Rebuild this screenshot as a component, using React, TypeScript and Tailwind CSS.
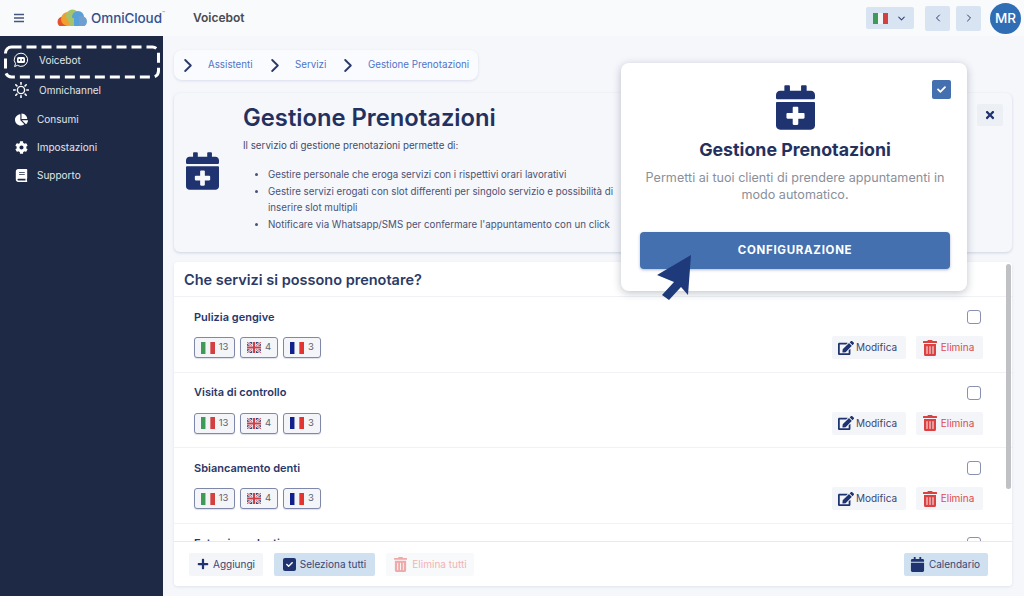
import React from "react";
import { FaCalendarPlus, FaEdit, FaTrashAlt, FaCog, FaBook, FaChartPie, FaCalendar, FaCheck, FaTimes, FaPlus } from "react-icons/fa";
import { ChevronDown, ChevronLeft, ChevronRight } from "lucide-react";

const navy = "#1f3370";

function Italy({ w = 14, h = 12 }: { w?: number; h?: number }) {
  return (
    <svg width={w} height={h} viewBox="0 0 3 2" preserveAspectRatio="none" className="shrink-0">
      <rect width="1" height="2" fill="#3f9a57" />
      <rect x="1" width="1" height="2" fill="#f3f4f6" />
      <rect x="2" width="1" height="2" fill="#d2413f" />
    </svg>
  );
}
function France() {
  return (
    <svg width="14" height="12" viewBox="0 0 3 2" preserveAspectRatio="none" className="shrink-0">
      <rect width="1" height="2" fill="#10218b" />
      <rect x="1" width="1" height="2" fill="#f3f4f6" />
      <rect x="2" width="1" height="2" fill="#e3342f" />
    </svg>
  );
}
function UK() {
  return (
    <svg width="14" height="11" viewBox="0 0 14 11" className="shrink-0">
      <rect width="14" height="11" fill="#3a4a80" />
      <path d="M0 0L14 11M14 0L0 11" stroke="#eef0f4" strokeWidth="2.4" />
      <path d="M0 0L14 11M14 0L0 11" stroke="#cf3f4a" strokeWidth="0.9" />
      <path d="M7 0V11M0 5.5H14" stroke="#eef0f4" strokeWidth="3.6" />
      <path d="M7 0V11M0 5.5H14" stroke="#cf3f4a" strokeWidth="2" />
    </svg>
  );
}

function Crumb() {
  return (
    <svg width="8" height="13" viewBox="0 0 8 13" fill="none" className="shrink-0">
      <path d="M1.2 1L6.8 6.5L1.2 12" stroke="#2a3768" strokeWidth="1.8" strokeLinecap="round" strokeLinejoin="round" />
    </svg>
  );
}

function Badge({ children, n, w }: { children: React.ReactNode; n: number; w: number }) {
  return (
    <span style={{ width: w }} className="h-[21px] flex items-center justify-center gap-[4px] rounded-[3px] border border-[#7f88a8] bg-[#f3f5f9] text-[9.5px] text-[#5b6270] shadow-[0_1px_1px_rgba(31,51,112,0.15)]">
      {children}
      <span>{n}</span>
    </span>
  );
}

function Row({ title }: { title: string }) {
  return (
    <div className="h-[75.5px] shrink-0 border-b border-[#f0f2f6] pl-[20px] pr-[29px] pt-[12px] flex flex-col">
      <div className="flex items-center justify-between h-[16px]">
        <span className="text-[11px] font-semibold text-[#2a3768]">{title}</span>
        <span className="w-[14px] h-[14px] mr-[2px] rounded-[3px] border border-[#8a90b0] bg-white" />
      </div>
      <div className="flex items-center justify-between mt-[11px]">
        <div className="flex gap-[5px]">
          <Badge n={13} w={41}><Italy /></Badge>
          <Badge n={4} w={38}><UK /></Badge>
          <Badge n={3} w={38}><France /></Badge>
        </div>
        <div className="flex gap-[10px]">
          <button className="h-[23px] w-[74px] pr-[3px] flex items-center justify-center gap-[2px] rounded-[2px] bg-[#f3f5f8] text-[10px] text-[#3a4673]">
            <FaEdit className="text-[16px]" style={{ color: navy }} />Modifica
          </button>
          <button className="h-[23px] w-[67px] pr-[3px] flex items-center justify-center gap-[3px] rounded-[2px] bg-[#f3f5f8] text-[10px] text-[#dd4b4b]">
            <FaTrashAlt className="text-[16px] text-[#dd4040]" />Elimina
          </button>
        </div>
      </div>
    </div>
  );
}

function NavItem({ icon, label, x, h }: { icon: React.ReactNode; label: string; x: number; h: number }) {
  return (
    <div style={{ height: h }} className="flex items-center pl-[13px] text-[10px] text-[#e2e5ec]">
      <span className="w-[16px] flex justify-center text-white text-[13px]">{icon}</span>
      <span style={{ marginLeft: x }}>{label}</span>
    </div>
  );
}

export default function App() {
  return (
    <div className="relative w-[1024px] h-[596px] overflow-hidden flex flex-col bg-[#f5f7fb]" style={{ fontFamily: "Inter, 'Liberation Sans', sans-serif" }}>
      {/* Top bar */}
      <header className="h-[36px] shrink-0 flex items-center bg-[#f8fafc]">
        <svg width="12" height="10" viewBox="0 0 12 10" className="ml-[13px]">
          <path d="M1 1.5H11M1 5H11M1 8.5H11" stroke="#44557f" strokeWidth="1.3" />
        </svg>
        <svg width="30" height="18" viewBox="0 0 30 18" className="ml-[32px]">
          <defs>
            <clipPath id="cl"><rect width="30" height="17" rx="3" /></clipPath>
          </defs>
          <g clipPath="url(#cl)">
            <circle cx="6" cy="13" r="5.5" fill="#e4522d" />
            <circle cx="11" cy="10" r="7" fill="#f0a030" />
            <circle cx="15.5" cy="7" r="6.5" fill="#a5c36a" />
            <circle cx="21" cy="8" r="6" fill="#5aa0d8" />
            <circle cx="24.5" cy="12.5" r="5.5" fill="#6f9fd0" />
            <rect x="16" y="9" width="6" height="8" fill="#5aa0d8" />
            <rect x="12" y="9" width="5" height="8" fill="#a5c36a" />
          </g>
        </svg>
        <span className="ml-[4px] text-[13.5px] font-medium text-[#35508f] tracking-[-0.1px]">OmniCloud</span>
        <span className="text-[5px] text-[#7a8090] -mt-[8px]">™</span>
        <span className="ml-[28px] text-[12px] font-semibold text-[#4a4a4f]">Voicebot</span>
        <div className="ml-auto flex items-center">
          <div className="w-[48px] h-[22px] flex items-center justify-center gap-[8px] rounded-[2px] bg-[#d8e4f2]">
            <Italy w={15} h={11} />
            <ChevronDown size={11} strokeWidth={2.2} className="text-[#2f3f70]" />
          </div>
          <button className="ml-[11px] w-[25px] h-[25px] flex items-center justify-center rounded-[2px] bg-[#d8e4f2]">
            <ChevronLeft size={12} strokeWidth={2} className="text-[#2f3f70]" />
          </button>
          <button className="ml-[6px] w-[25px] h-[25px] flex items-center justify-center rounded-[2px] bg-[#d8e4f2]">
            <ChevronRight size={12} strokeWidth={2} className="text-[#2f3f70]" />
          </button>
          <div className="ml-[9px] mr-[3px] w-[31px] h-[31px] flex items-center justify-center rounded-full bg-[#2f6db5] text-white text-[13.5px] font-medium">MR</div>
        </div>
      </header>

      <div className="flex flex-1 min-h-0">
        {/* Sidebar */}
        <aside className="w-[163px] shrink-0 bg-[#1e2a45] pt-[9px]">
          <NavItem h={30} x={10} label="Voicebot" icon={
            <svg width="16" height="16" viewBox="0 0 16 16" fill="none">
              <path d="M8 1.2a6.6 6.6 0 1 1-3.6 12.1L1.6 14.6l.9-2.9A6.6 6.6 0 0 1 8 1.2Z" stroke="#fff" strokeWidth="1" />
              <rect x="4" y="5" width="8" height="6" rx="1.5" fill="#fff" />
              <circle cx="6.4" cy="8" r=".9" fill="#1e2a45" />
              <circle cx="9.6" cy="8" r=".9" fill="#1e2a45" />
            </svg>
          } />
          <NavItem h={30} x={10} label="Omnichannel" icon={
            <svg width="16" height="16" viewBox="0 0 16 16" fill="none" stroke="#fff">
              <circle cx="8" cy="8" r="3.6" strokeWidth="1.4" />
              <path d="M8 .6V2.2M8 13.8V15.4M.6 8H2.2M13.8 8H15.4M2.8 2.8L3.9 3.9M12.1 12.1L13.2 13.2M2.8 13.2L3.9 12.1M12.1 3.9L13.2 2.8" strokeWidth="1.6" strokeLinecap="round" />
            </svg>
          } />
          <NavItem h={28} x={8} label="Consumi" icon={<FaChartPie />} />
          <NavItem h={28} x={8} label="Impostazioni" icon={<FaCog />} />
          <NavItem h={28} x={8} label="Supporto" icon={<FaBook />} />
        </aside>

        {/* Main */}
        <main className="flex-1 min-w-0 pl-[11px] pr-[12px] pt-[14px] pb-[10px] flex flex-col">
          <nav className="w-[304px] h-[30px] shrink-0 flex items-center pl-[10px] rounded-[8px] bg-[#fafbfe] shadow-[0_1px_3px_rgba(31,51,112,0.12)] text-[9.75px] whitespace-nowrap text-[#4f74c9]">
            <Crumb />
            <span className="ml-[16px] w-[47px]">Assistenti</span>
            <span className="ml-[16px]"><Crumb /></span>
            <span className="ml-[16px] w-[33px]">Servizi</span>
            <span className="ml-[16px]"><Crumb /></span>
            <span className="ml-[16px]">Gestione Prenotazioni</span>
          </nav>

          <section className="relative mt-[13px] h-[159px] shrink-0 flex rounded-[6px] bg-[#f5f7fb] shadow-[0_1px_3px_rgba(31,51,112,0.18)]">
            <FaCalendarPlus className="ml-[12px] mt-[59px] shrink-0" style={{ color: navy, width: 33, height: 38 }} />
            <div className="ml-[24px] pt-[9px] text-[#434b6b]">
              <h1 className="text-[23.75px] leading-[32px] font-semibold text-[#24315f]">Gestione Prenotazioni</h1>
              <p className="mt-[4px] text-[9.75px] leading-[16px]">Il servizio di gestione prenotazioni permette di:</p>
              <ul className="mt-[13px] pl-[25px] w-[374px] list-disc text-[9.75px] leading-[16.7px] text-[#4a5275]">
                <li>Gestire personale che eroga servizi con i rispettivi orari lavorativi</li>
                <li>Gestire servizi erogati con slot differenti per singolo servizio e possibilità di inserire slot multipli</li>
                <li>Notificare via Whatsapp/SMS per confermare l'appuntamento con un click</li>
              </ul>
            </div>
            <button className="absolute right-[9px] top-[11px] w-[26px] h-[22px] flex items-center justify-center bg-[#eceff4] rounded-[2px]">
              <FaTimes className="text-[12px]" style={{ color: navy }} />
            </button>
          </section>

          <section className="relative mt-[10px] flex-1 min-h-0 flex flex-col rounded-[4px] bg-white shadow-[0_1px_3px_rgba(31,51,112,0.1)]">
            <h2 className="h-[35px] shrink-0 flex items-center pl-[10px] pt-[1px] text-[14.5px] font-semibold text-[#2d3a66] border-b border-[#f0f2f6]">Che servizi si possono prenotare?</h2>
            <div className="flex-1 min-h-0 overflow-hidden">
              <Row title="Pulizia gengive" />
              <Row title="Visita di controllo" />
              <Row title="Sbiancamento denti" />
              <Row title="Estrazione denti" />
            </div>
            <div className="h-[45px] shrink-0 flex items-center pl-[15px] pr-[24px] border-t border-[#e6e9ef] bg-white rounded-b-[4px]">
              <button className="h-[23px] w-[74px] flex items-center justify-center gap-[4px] rounded-[2px] bg-[#f3f5f8] text-[10px] text-[#3a4673]">
                <FaPlus className="text-[12px]" style={{ color: navy }} />Aggiungi
              </button>
              <button className="ml-[11px] h-[23px] w-[101px] flex items-center justify-center gap-[4px] rounded-[2px] bg-[#cfe0f0] text-[10px] text-[#3a4673]">
                <span className="w-[13px] h-[13px] flex items-center justify-center rounded-[2px]" style={{ background: navy }}>
                  <FaCheck className="text-[7px] text-white" />
                </span>
                Seleziona tutti
              </button>
              <button className="ml-[11px] h-[23px] w-[88px] flex items-center justify-center gap-[4px] rounded-[2px] bg-[#f8f9fb] text-[10px] text-[#f2b3b3]">
                <FaTrashAlt className="text-[15px] text-[#f0a9a9]" />Elimina tutti
              </button>
              <button className="ml-auto h-[23px] w-[84px] pr-[2px] flex items-center justify-center gap-[4px] rounded-[2px] bg-[#cfe0f0] text-[10px] text-[#3a4673]">
                <FaCalendar className="text-[15px]" style={{ color: navy }} />Calendario
              </button>
            </div>
            <div className="absolute right-[1px] top-[2px] w-[5px] h-[225px] rounded-full bg-[#bfc1c5]" />
          </section>
        </main>
      </div>

      {/* Dashed highlight */}
      <svg className="absolute left-[3px] top-[45px]" width="158" height="34" fill="none">
        <rect x="2.5" y="2" width="153" height="30" rx="6" stroke="#fff" strokeWidth="3" strokeDasharray="10 5" />
      </svg>

      {/* Popup */}
      <div className="absolute left-[621px] top-[63px] w-[346px] h-[228px] rounded-[8px] bg-white shadow-[0_2px_8px_rgba(31,41,70,0.28)] flex flex-col items-center pl-[19px] pr-[17px]">
        <span className="absolute right-[16px] top-[17px] w-[19px] h-[19px] flex items-center justify-center rounded-[2px] bg-[#4470b0]">
          <FaCheck className="text-[9px] text-white" />
        </span>
        <FaCalendarPlus className="mt-[22px] shrink-0" style={{ color: navy, width: 39, height: 45 }} />
        <h3 className="mt-[8px] text-[17.8px] leading-[24px] font-bold text-[#24315f]">Gestione Prenotazioni</h3>
        <p className="mt-[7px] text-[12.6px] leading-[17px] text-center text-[#8a8f9a]">Permetti ai tuoi clienti di prendere appuntamenti in modo automatico.</p>
        <button className="mt-[29px] w-full h-[37px] shrink-0 rounded-[4px] bg-[#4470b0] text-white text-[11.5px] font-bold tracking-[0.7px] shadow-[0_1px_3px_rgba(31,51,112,0.35)]">CONFIGURAZIONE</button>
      </div>

      {/* Arrow cursor */}
      <svg className="absolute left-[655px] top-[252px]" width="40" height="50" viewBox="655 252 40 50">
        <path d="M691 255L657 275L674 282L662 295L669 300L681 287L688 295Z" fill="#1f3a7a" />
      </svg>
    </div>
  );
}
